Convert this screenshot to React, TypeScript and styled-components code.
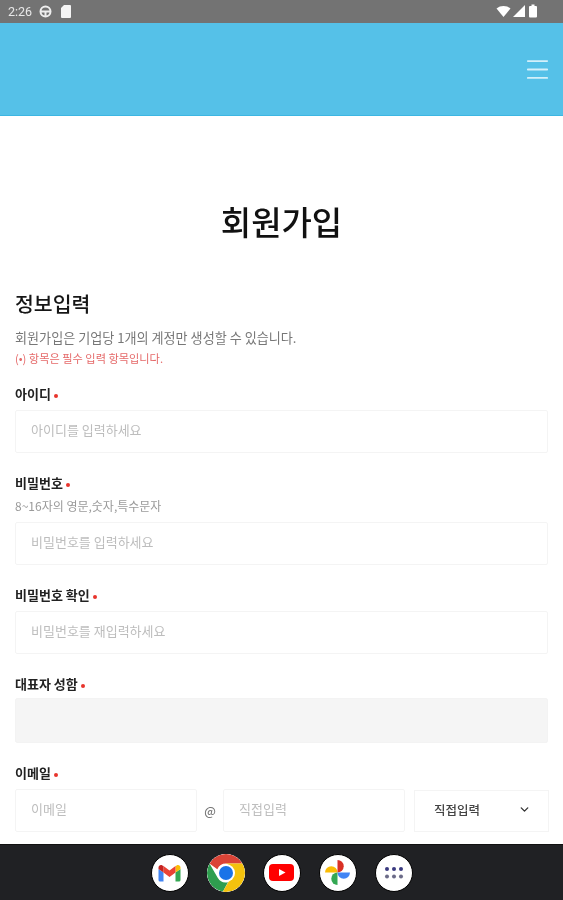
import React from "react";
import styled, { createGlobalStyle } from "styled-components";
import { ChevronDown, Menu } from "lucide-react";

const GlobalStyle = createGlobalStyle`
  html, body {
    margin: 0;
    padding: 0;
    background: #fff;
  }
  * {
    box-sizing: border-box;
  }
`;

const GmailIcon = () => (
  <svg width="25" height="18" viewBox="0 0 24 18">
    <path d="M1 5v11a1.5 1.5 0 0 0 1.5 1.5H6V8.500z" fill="#4285f4" />
    <path d="M18 8.500v9h3.500A1.500 1.500 0 0 0 23 16V5z" fill="#34a853" />
    <path d="M18 2v6.500L23 5V3.500C23 1.500 20.700 .4 19.200 1.500z" fill="#fbbc04" />
    <path d="M6 8.500V2l6 4.500L18 2v6.500l-6 4.500z" fill="#ea4335" />
    <path d="M1 3.500V5l5 3.500V2L4.800 1.500C3.300 .4 1 1.500 1 3.500z" fill="#c5221f" />
  </svg>
);

const ChromeIcon = () => (
  <svg width="38" height="38" viewBox="0 0 38 38">
    <circle cx="19" cy="19" r="19" fill="#fff" />
    <path d="M19 0a19 19 0 0 1 16.500 9.500H19a9.500 9.500 0 0 0-8.700 5.700L2.500 9.500A19 19 0 0 1 19 0z" fill="#db4437" />
    <path d="M2.500 9.500l8.200 14.200A9.500 9.500 0 0 0 21 28.200L15.800 37.700A19 19 0 0 1 2.500 9.500z" fill="#2f9e4f" />
    <path d="M35.500 9.500A19 19 0 0 1 15.800 37.700l8.200-14.200a9.500 9.500 0 0 0-5-14z" fill="#f4c20d" />
    <circle cx="19" cy="19" r="9" fill="#fff" />
    <circle cx="19" cy="19" r="7" fill="#1a73e8" />
  </svg>
);

const YoutubeIcon = () => (
  <svg width="25" height="17" viewBox="0 0 25 17">
    <rect x="0" y="0" width="25" height="17" rx="4" fill="#f00" />
    <path d="M10 5l6.500 3.500L10 12z" fill="#fff" />
  </svg>
);

const PhotosIcon = () => (
  <svg width="27" height="27" viewBox="0 0 26 26">
    <path d="M13 13H1a6 6 0 0 1 12 0z" fill="#fbbc04" />
    <path d="M13 13V1a6 6 0 0 1 0 12z" fill="#d93025" />
    <path d="M13 13h12a6 6 0 0 1-12 0z" fill="#4285f4" />
    <path d="M13 13v12a6 6 0 0 1 0-12z" fill="#34a853" />
  </svg>
);

const AppsIcon = () => (
  <svg width="20" height="14" viewBox="0 0 20 14">
    {[3, 10, 17].map((cx) => (
      <React.Fragment key={cx}>
        <circle cx={cx} cy="3" r="2" fill="#3a3a80" />
        <circle cx={cx} cy="10.500" r="2" fill="#6b6b88" />
      </React.Fragment>
    ))}
  </svg>
);

export default function App() {
  return (
    <Screen>
      <GlobalStyle />
      <StatusBar>
        <StatusLeft>
          <Clock>2:26</Clock>
          <svg width="13" height="13" viewBox="0 0 13 13">
            <circle cx="6.500" cy="6.500" r="5" fill="none" stroke="#eee" strokeWidth="2" />
            <path d="M2 6.500h9M6.500 7v4" stroke="#eee" strokeWidth="2" />
          </svg>
          <svg width="10" height="13" viewBox="0 0 10 13">
            <path d="M3 0h6a1 1 0 0 1 1 1v11a1 1 0 0 1-1 1H1a1 1 0 0 1-1-1V3z" fill="#f4f4f4" />
          </svg>
        </StatusLeft>
        <StatusRight>
          <svg width="15" height="11" viewBox="0 0 14 11">
            <path d="M0 2.500C4 -.8 10 -.8 14 2.500L7 11z" fill="#fff" />
          </svg>
          <svg width="14" height="12" viewBox="0 0 12 12">
            <path d="M12 0v12H0z" fill="#fff" />
          </svg>
          <svg width="8" height="14" viewBox="0 0 8 13">
            <path d="M2.500 0h3v1.500H7a1 1 0 0 1 1 1V12a1 1 0 0 1-1 1H1a1 1 0 0 1-1-1V2.500a1 1 0 0 1 1-1h1.500z" fill="#fff" />
          </svg>
        </StatusRight>
      </StatusBar>

      <Header>
        <MenuButton>
          <Menu size={29} strokeWidth={1.500} color="#d3f0fa" />
        </MenuButton>
      </Header>

      <Content>
        <Title>회원가입</Title>
        <SectionTitle>정보입력</SectionTitle>
        <Description>회원가입은 기업당 1개의 계정만 생성할 수 있습니다.</Description>
        <RequiredNote>(•) 항목은 필수 입력 항목입니다.</RequiredNote>

        <FirstField>
          <Label>아이디<Dot /></Label>
          <TextInput placeholder="아이디를 입력하세요" />
        </FirstField>

        <Field>
          <Label>비밀번호<Dot /></Label>
          <Hint>8~16자의 영문,숫자,특수문자</Hint>
          <TextInput placeholder="비밀번호를 입력하세요" />
        </Field>

        <Field>
          <Label>비밀번호 확인<Dot /></Label>
          <TextInput placeholder="비밀번호를 재입력하세요" />
        </Field>

        <Field>
          <TightLabel>대표자 성함<Dot /></TightLabel>
          <DisabledInput disabled />
        </Field>

        <Field>
          <Label>이메일<Dot /></Label>
          <EmailRow>
            <TextInput placeholder="이메일" />
            <At>@</At>
            <TextInput placeholder="직접입력" />
            <SelectBox>
              직접입력
              <ChevronDown size={13} strokeWidth={2.500} color="#333" />
            </SelectBox>
          </EmailRow>
        </Field>
      </Content>

      <NavBar>
        <Dock>
          <DockIcon><GmailIcon /></DockIcon>
          <DockIcon $bare><ChromeIcon /></DockIcon>
          <DockIcon><YoutubeIcon /></DockIcon>
          <DockIcon><PhotosIcon /></DockIcon>
          <DockIcon><AppsIcon /></DockIcon>
        </Dock>
      </NavBar>
    </Screen>
  );
}

const Screen = styled.div`
  width: 563px;
  height: 900px;
  display: flex;
  flex-direction: column;
  overflow: hidden;
  background: #fff;
  font-family: "Noto Sans CJK KR", "Noto Sans", sans-serif;
`;

const StatusBar = styled.div`
  height: 23px;
  flex: none;
  display: flex;
  align-items: center;
  justify-content: space-between;
  padding: 0 26px 1px 8px;
  background: #737373;
  filter: blur(0.4px);
`;

const StatusLeft = styled.div`
  display: flex;
  align-items: center;
  gap: 7px;

  & > svg:last-child {
    margin-left: 2px;
  }
`;

const StatusRight = styled.div`
  display: flex;
  align-items: center;
  gap: 1px;

  & > svg:last-child {
    margin-left: 2px;
  }
`;

const Clock = styled.span`
  font-family: Roboto, sans-serif;
  font-size: 12.500px;
  color: #e8e8e8;
`;

const Header = styled.header`
  height: 93px;
  flex: none;
  display: flex;
  align-items: center;
  justify-content: flex-end;
  padding-right: 11px;
  background: #55c1e8;
  border-bottom: 1px solid #3cb6e2;
`;

const MenuButton = styled.div`
  display: flex;
  margin-top: 1px;
`;

const Content = styled.main`
  flex: 1;
  min-height: 0;
  overflow: hidden;
  padding: 80px 15px 0;
  filter: blur(0.4px);
`;

const Title = styled.h1`
  margin: 0;
  text-align: center;
  font-size: 33px;
  line-height: 50px;
  font-weight: 500;
  color: #111;
`;

const SectionTitle = styled.h2`
  margin: 42px 0 0;
  font-size: 20.500px;
  line-height: 30px;
  font-weight: 500;
  color: #161616;
`;

const Description = styled.p`
  margin: 10px 0 0;
  font-size: 13.100px;
  line-height: 20px;
  color: #777;
`;

const RequiredNote = styled.p`
  margin: 2px 0 0;
  font-size: 11.200px;
  line-height: 16px;
  color: #e56a6a;
`;

const Field = styled.div`
  margin-top: 19px;
`;

const FirstField = styled(Field)`
  margin-top: 17px;
`;

const Label = styled.div`
  display: flex;
  align-items: center;
  height: 20px;
  margin-bottom: 7px;
  font-size: 13px;
  font-weight: 700;
  color: #222;
`;

const TightLabel = styled(Label)`
  margin-bottom: 5px;
`;

const Dot = styled.span`
  width: 4px;
  height: 4px;
  margin: 6px 0 0 3px;
  border-radius: 50%;
  background: #e8342c;
`;

const Hint = styled.div`
  margin: -1px 0 8px;
  font-size: 12px;
  line-height: 16px;
  color: #9a9a9a;
`;

const TextInput = styled.input`
  display: block;
  width: 100%;
  height: 43px;
  padding: 0 15px 5px;
  border: 1px solid #f4f4f4;
  border-radius: 2px;
  outline: none;
  background: #fff;
  font-family: inherit;
  font-size: 13px;

  &::placeholder {
    color: #bdbdbd;
  }
`;

const DisabledInput = styled(TextInput)`
  height: 45px;
  background: #f5f5f5;
  border-color: #f3f3f3;
`;

const EmailRow = styled.div`
  display: grid;
  grid-template-columns: 182px 26px 182px 144px;
  align-items: center;
  width: 534px;
`;

const At = styled.span`
  text-align: center;
  font-size: 12px;
  font-weight: 500;
  color: #777;
`;

const SelectBox = styled.div`
  height: 42px;
  margin-left: 9px;
  display: flex;
  align-items: center;
  justify-content: space-between;
  padding: 0 17px 3px 19px;
  border: 1px solid #f4f4f4;
  font-size: 12.500px;
  font-weight: 500;
  color: #444;
`;

const NavBar = styled.nav`
  height: 56px;
  flex: none;
  display: flex;
  align-items: center;
  justify-content: center;
  background: #202124;
  border-top: 1px solid #111;
`;

const Dock = styled.div`
  display: flex;
  gap: 18px;
`;

const DockIcon = styled.div<{ $bare?: boolean }>`
  width: 38px;
  height: 38px;
  display: flex;
  align-items: center;
  justify-content: center;
  border-radius: 50%;
  overflow: hidden;
  background: #fff;
  border: ${(p) => (p.$bare ? "none" : "1.5px solid #000")};
  filter: blur(0.4px);
`;
